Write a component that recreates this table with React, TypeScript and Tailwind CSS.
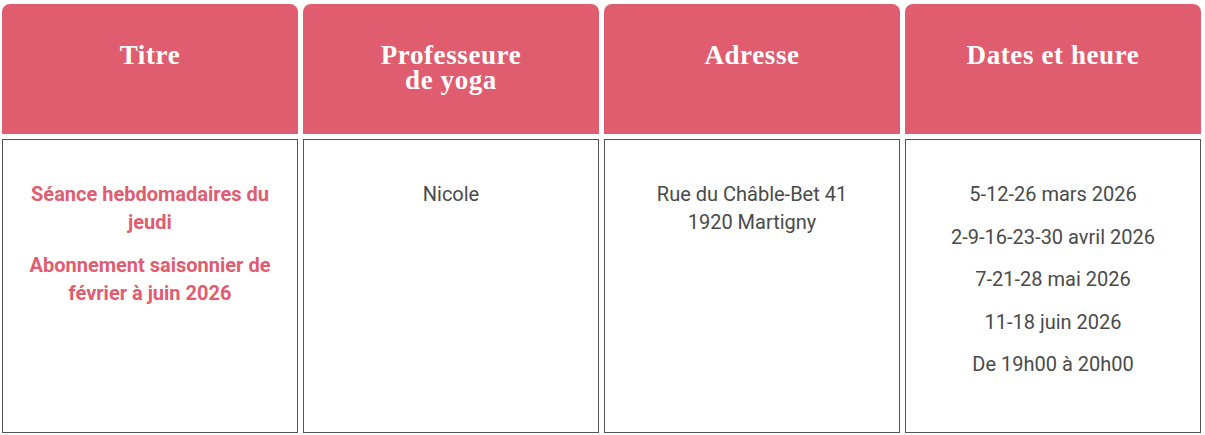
const columns = [
  { title: ["Titre"], accent: true, lines: ["Séance hebdomadaires du jeudi", "Abonnement saisonnier de février à juin 2026"] },
  { title: ["Professeure", "de yoga"], accent: false, lines: ["Nicole"] },
  { title: ["Adresse"], accent: false, lines: ["Rue du Châble-Bet 41\n1920 Martigny"] },
  {
    title: ["Dates et heure"],
    accent: false,
    lines: ["5-12-26 mars 2026", "2-9-16-23-30 avril 2026", "7-21-28 mai 2026", "11-18 juin 2026", "De 19h00 à 20h00"],
  },
];

export default function App() {
  return (
    <div className="w-[1205px] h-[435px] bg-white pt-[4px] pl-[2px] flex gap-[5px]">
      {columns.map((col, i) => (
        <div key={i} className="w-[296px] flex flex-col gap-[5px]">
          {/* Header */}
          <div className="h-[130px] bg-[#e05d70] rounded-t-[8px] pt-[39px] text-center text-white font-bold text-[27px] leading-[25px] tracking-[0.6px] font-['Liberation_Serif',serif]">
            {col.title.map((t) => (
              <div key={t}>{t}</div>
            ))}
          </div>

          {/* Body */}
          <div className="h-[294px] border border-[#555555] pt-[40px] px-[18px] text-center font-['Roboto',sans-serif] text-[20px] leading-[28px]">
            {col.lines.map((l) => (
              <p
                key={l}
                className={`mb-[14.5px] whitespace-pre-line ${col.accent ? "text-[#e05d70] font-bold" : "text-[#4a4a4a]"}`}
              >
                {l}
              </p>
            ))}
          </div>
        </div>
      ))}
    </div>
  );
}
